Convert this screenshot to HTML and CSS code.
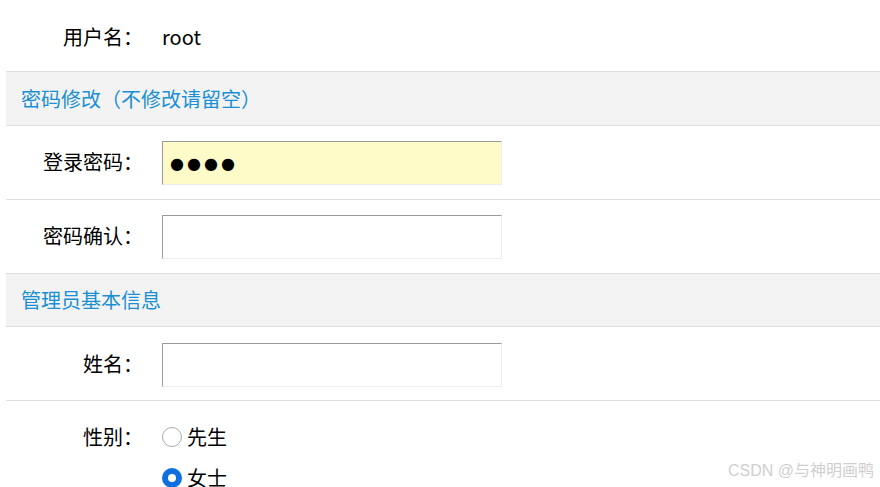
FILE: index.html
```html
<!DOCTYPE html>
<html lang="zh-CN">
<head>
  <meta charset="UTF-8">
  <title>管理员信息</title>
  <link rel="stylesheet" href="styles.css">
</head>
<body>
  <div class="page">
    <form class="admin-form">
      <div class="row first">
        <div class="label">用户名：</div>
        <div class="value">root</div>
      </div>

      <div class="section">密码修改（不修改请留空）</div>

      <div class="row">
        <div class="label">登录密码：</div>
        <div class="value"><input type="text" class="field filled" value="●●●●" readonly></div>
      </div>
      <div class="row">
        <div class="label">密码确认：</div>
        <div class="value"><input type="password" class="field"></div>
      </div>

      <div class="section short">管理员基本信息</div>

      <div class="row">
        <div class="label">姓名：</div>
        <div class="value"><input type="text" class="field"></div>
      </div>
      <div class="row gender">
        <div class="label">性别：</div>
        <div class="value options">
          <label class="option"><input type="radio" name="sex" class="radio"> 先生</label>
          <label class="option"><input type="radio" name="sex" class="radio" checked> 女士</label>
        </div>
      </div>
    </form>
  </div>

  <div class="watermark">CSDN @与神明画鸭</div>
</body>
</html>
```

FILE: styles.css
```css
body {
  margin: 0;
  font-family: "Noto Sans CJK SC", "Noto Sans", sans-serif;
  font-size: 20px;
  color: #000;
  background: #fff;
  overflow: hidden;
}

.page {
  padding-left: 6px;
}

.row {
  display: grid;
  grid-template-columns: 137px 1fr;
  column-gap: 19px;
  align-items: center;
  padding: 15px 0 14px;
  border-bottom: 1px solid #dedede;
  line-height: 24px;
}

.row.first {
  height: 72px;
  box-sizing: border-box;
  padding: 2px 0 0;
}

.label {
  text-align: right;
  margin-top: -3px;
}

.row.first .label {
  margin-top: 0;
}

.section {
  height: 54px;
  box-sizing: border-box;
  padding-left: 15px;
  line-height: 54px;
  background: #f3f3f3;
  color: #1a8fd3;
  border-bottom: 1px solid #dedede;
}

.section.short {
  height: 53px;
  line-height: 52px;
}

.section.short + .row {
  padding: 16px 0 13px;
}

.field {
  display: block;
  box-sizing: border-box;
  width: 340px;
  height: 44px;
  margin: 0;
  padding: 0 7px;
  border-top: 1px solid #9a9a9a;
  border-left: 1px solid #9a9a9a;
  border-right: 1px solid #ececec;
  border-bottom: 1px solid #ececec;
  font-family: inherit;
  font-size: 20px;
  background: #fff;
  outline: none;
}

.field.filled {
  background: #fffbc8;
  font-family: "DejaVu Sans", sans-serif;
  font-size: 16px;
  letter-spacing: 3px;
}

.row.gender {
  align-items: start;
  padding: 26px 0 0;
  border-bottom: none;
}

.row.gender .label {
  margin-top: -2px;
}

.options {
  display: flex;
  flex-direction: column;
  gap: 21px;
}

.option {
  display: flex;
  align-items: center;
  gap: 5px;
  height: 20px;
}

.radio {
  appearance: none;
  -webkit-appearance: none;
  box-sizing: border-box;
  width: 20px;
  height: 20px;
  margin: 0;
  border-radius: 50%;
  border: 1px solid #a9a9a9;
  background: #fff;
}

.radio:checked {
  border: 6px solid #0f6fde;
}

.watermark {
  position: absolute;
  right: 6px;
  bottom: 6px;
  font-family: "Liberation Sans", "Noto Sans CJK SC", sans-serif;
  font-size: 16px;
  color: #cfcfcf;
}
```
